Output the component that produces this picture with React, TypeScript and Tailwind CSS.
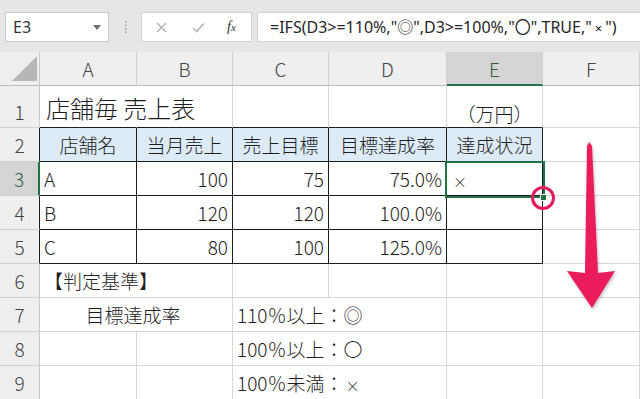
import React from "react";

const W = ["w-[97px]", "w-[96px]", "w-[96px]", "w-[118px]", "w-[96px]", "w-[97px]"];

type C = {
  t?: React.ReactNode;
  a?: "l" | "r" | "c";
  r: "g" | "k" | "n";
  b: "g" | "k";
  bg?: boolean;
  span?: string;
  extra?: string;
};

const RB: Record<string, string> = {
  g: "border-r border-r-[#d6d6d6]",
  k: "border-r border-r-[#1c1c1c]",
  n: "border-r border-r-transparent",
};
const BB: Record<string, string> = {
  g: "border-b border-b-[#d6d6d6]",
  k: "border-b border-b-[#1c1c1c]",
};
const AL: Record<string, string> = {
  l: "justify-start pl-[4px]",
  r: "justify-end pr-[4px]",
  c: "justify-center",
};

const X = <span className="text-[14px] inline-block px-[2px]">×</span>;

const rows: { n: string; h: string; hb: string; cells: C[]; title?: boolean }[] = [
  {
    n: "1",
    h: "h-[42px]",
    hb: "border-r-[#c8c8c8]",
    title: true,
    cells: [
      { t: "店舗毎 売上表", a: "l", r: "n", b: "k", extra: "text-[24px] pl-[6px] pt-[2px]" },
      { r: "g", b: "k" },
      { r: "g", b: "k" },
      { r: "g", b: "k" },
      { t: "（万円）", a: "c", r: "g", b: "k", extra: "pt-[14px]" },
      { r: "g", b: "g" },
    ],
  },
  {
    n: "2",
    h: "h-[34px]",
    hb: "border-r-[#1c1c1c]",
    cells: [
      { t: "店舗名", a: "c", r: "k", b: "k", bg: true },
      { t: "当月売上", a: "c", r: "k", b: "k", bg: true },
      { t: "売上目標", a: "c", r: "k", b: "k", bg: true },
      { t: "目標達成率", a: "c", r: "k", b: "k", bg: true },
      { t: "達成状況", a: "c", r: "k", b: "k", bg: true },
      { r: "g", b: "g" },
    ],
  },
  {
    n: "3",
    h: "h-[34px]",
    hb: "border-r-[#217346]",
    cells: [
      { t: "A", a: "l", r: "k", b: "k" },
      { t: "100", a: "r", r: "k", b: "k" },
      { t: "75", a: "r", r: "k", b: "k" },
      { t: "75.0%", a: "r", r: "k", b: "k" },
      { t: X, a: "l", r: "k", b: "k" },
      { r: "g", b: "g" },
    ],
  },
  {
    n: "4",
    h: "h-[34px]",
    hb: "border-r-[#1c1c1c]",
    cells: [
      { t: "B", a: "l", r: "k", b: "k" },
      { t: "120", a: "r", r: "k", b: "k" },
      { t: "120", a: "r", r: "k", b: "k" },
      { t: "100.0%", a: "r", r: "k", b: "k" },
      { r: "k", b: "k" },
      { r: "g", b: "g" },
    ],
  },
  {
    n: "5",
    h: "h-[34px]",
    hb: "border-r-[#1c1c1c]",
    cells: [
      { t: "C", a: "l", r: "k", b: "k" },
      { t: "80", a: "r", r: "k", b: "k" },
      { t: "100", a: "r", r: "k", b: "k" },
      { t: "125.0%", a: "r", r: "k", b: "k" },
      { r: "k", b: "k" },
      { r: "g", b: "g" },
    ],
  },
  {
    n: "6",
    h: "h-[34px]",
    hb: "border-r-[#c8c8c8]",
    cells: [
      { t: "【判定基準】", a: "l", r: "n", b: "g" },
      { r: "g", b: "g" },
      { r: "g", b: "g" },
      { r: "g", b: "g" },
      { r: "g", b: "g" },
      { r: "g", b: "g" },
    ],
  },
  {
    n: "7",
    h: "h-[34px]",
    hb: "border-r-[#c8c8c8]",
    cells: [
      { t: "目標達成率", a: "c", r: "g", b: "g", span: "w-[193px]", extra: "pr-[6px]" },
      { t: "110％以上：◎", a: "l", r: "n", b: "g" },
      { r: "g", b: "g" },
      { r: "g", b: "g" },
      { r: "g", b: "g" },
    ],
  },
  {
    n: "8",
    h: "h-[34px]",
    hb: "border-r-[#c8c8c8]",
    cells: [
      { r: "g", b: "g" },
      { r: "g", b: "g" },
      { t: "100％以上：〇", a: "l", r: "n", b: "g" },
      { r: "g", b: "g" },
      { r: "g", b: "g" },
      { r: "g", b: "g" },
    ],
  },
  {
    n: "9",
    h: "h-[34px]",
    hb: "border-r-[#c8c8c8]",
    cells: [
      { r: "g", b: "g" },
      { r: "g", b: "g" },
      {
        t: <>100％未満：{X}</>,
        a: "l",
        r: "n",
        b: "g",
      },
      { r: "g", b: "g" },
      { r: "g", b: "g" },
      { r: "g", b: "g" },
    ],
  },
];

function Row({ row }: { row: (typeof rows)[number] }) {
  let ci = 0;
  const sel = row.n === "3";
  return (
    <div className={`flex ${row.h}`}>
      <div
        className={`w-[40px] shrink-0 flex items-center justify-center border-b border-b-[#d0d0d0] ${
          sel ? "border-r-2 bg-[#d4d4d4] text-[#2d5e3e]" : "border-r bg-[#efefef] text-[#444]"
        } ${row.hb} ${row.title ? "pt-[10px]" : ""}`}
      >
        {row.n}
      </div>
      {row.cells.map((c, i) => {
        const w = c.span ?? W[ci];
        ci += c.span ? 2 : 1;
        return (
          <div
            key={i}
            className={`${w} shrink-0 flex items-center whitespace-nowrap overflow-visible ${RB[c.r]} ${BB[c.b]} ${
              c.bg ? "bg-[#ddebf7]" : ""
            } ${AL[c.a ?? "l"]} ${c.extra ?? ""}`}
          >
            {c.t ? <span className="relative z-10">{c.t}</span> : null}
          </div>
        );
      })}
    </div>
  );
}

export default function App() {
  const cols = ["A", "B", "C", "D", "E", "F"];
  return (
    <div className="w-[640px] h-[399px] overflow-hidden relative bg-white font-['Noto_Sans_CJK_JP',sans-serif] font-light text-[19px] leading-none text-[#1e1e1e]">
      {/* toolbar */}
      <div className="h-[52px] bg-[#e6e6e6] flex items-start pt-[12px]">
        <div className="ml-[5px] w-[104px] h-[30px] bg-white border border-[#cacaca] flex items-center justify-between pl-[7px] pr-[7px]">
          <span className="font-['Noto_Sans',sans-serif] font-normal text-[16px] text-[#333]">E3</span>
          <svg width="8" height="5" viewBox="0 0 8 5">
            <path d="M0 0 L8 0 L4 5 Z" fill="#6f6f6f" />
          </svg>
        </div>
        <div className="w-[32px] h-[30px] flex items-center justify-center">
          <svg width="3" height="12" viewBox="0 0 3 12">
            <rect x="1" y="0" width="1.5" height="1.5" fill="#9a9a9a" />
            <rect x="1" y="3.5" width="1.5" height="1.5" fill="#9a9a9a" />
            <rect x="1" y="7" width="1.5" height="1.5" fill="#9a9a9a" />
            <rect x="1" y="10.5" width="1.5" height="1.5" fill="#9a9a9a" />
          </svg>
        </div>
        <div className="w-[111px] h-[30px] bg-white border border-[#d2d2d2] flex items-center">
          <svg className="ml-[14px]" width="11" height="11" viewBox="0 0 11 11">
            <path d="M1 1 L10 10 M10 1 L1 10" stroke="#b4b4b4" strokeWidth="1.5" />
          </svg>
          <svg className="ml-[25px]" width="13" height="11" viewBox="0 0 13 11">
            <path d="M1 6 L4.5 9.5 L12 1.5" stroke="#b4b4b4" strokeWidth="1.6" fill="none" />
          </svg>
          <span className="ml-[22px] font-['Liberation_Serif',serif] font-normal italic text-[14px] text-[#333]">
            f<span className="text-[11px]">x</span>
          </span>
        </div>
        <div className="ml-[5px] flex-1 h-[30px] bg-white border border-[#d2d2d2] border-r-0 flex items-center pl-[12px]">
          <span className="font-['Noto_Sans','Noto_Sans_CJK_JP',sans-serif] font-normal text-[16px] text-[#262626] whitespace-nowrap">
            =IFS(D3&gt;=110%,"◎",D3&gt;=100%,"〇",TRUE,"<span className="text-[13px] px-[3px]">×</span>")
          </span>
        </div>
      </div>
      {/* column headers */}
      <div className="flex h-[34px] bg-[#efefef]">
        <div className="w-[40px] shrink-0 relative border-r border-r-[#c8c8c8] border-b border-b-[#bdbdbd]">
          <svg className="absolute left-[11px] top-[3px]" width="27" height="27" viewBox="0 0 27 27">
            <path d="M1 26 L26 26 L26 1 Z" fill="#b6b6b6" />
          </svg>
        </div>
        {cols.map((c, i) => (
          <div
            key={c}
            className={`${W[i]} shrink-0 flex items-center justify-center border-r border-r-[#d0d0d0] ${
              c === "E"
                ? "bg-[#d4d4d4] text-[#2d5e3e] border-b-2 border-b-[#217346]"
                : "text-[#444] border-b border-b-[#bdbdbd]"
            }`}
          >
            {c}
          </div>
        ))}
      </div>
      {rows.map((r) => (
        <Row key={r.n} row={r} />
      ))}

      {/* selection */}
      <div className="absolute left-[445px] top-[161px] w-[100px] h-[37px] border-2 border-[#217346]" />
      <div className="absolute left-[531px] top-[186px] w-[24px] h-[24px] rounded-full border-[3px] border-[#e5195e]" />
      <div className="absolute left-[540px] top-[194px] w-[7px] h-[7px] bg-[#217346] border border-white" />

      {/* arrow */}
      <svg className="absolute left-0 top-0 pointer-events-none" width="640" height="399" viewBox="0 0 640 399">
        <defs>
          <filter id="sh" x="-50%" y="-50%" width="200%" height="200%">
            <feDropShadow dx="1" dy="2" stdDeviation="1.5" floodColor="#000" floodOpacity="0.25" />
          </filter>
        </defs>
        <polygon
          points="587,146 589,142 592,146 598,273 615,271 592,308 567,271 585,273"
          fill="#ea1a5c"
          filter="url(#sh)"
        />
      </svg>
    </div>
  );
}
